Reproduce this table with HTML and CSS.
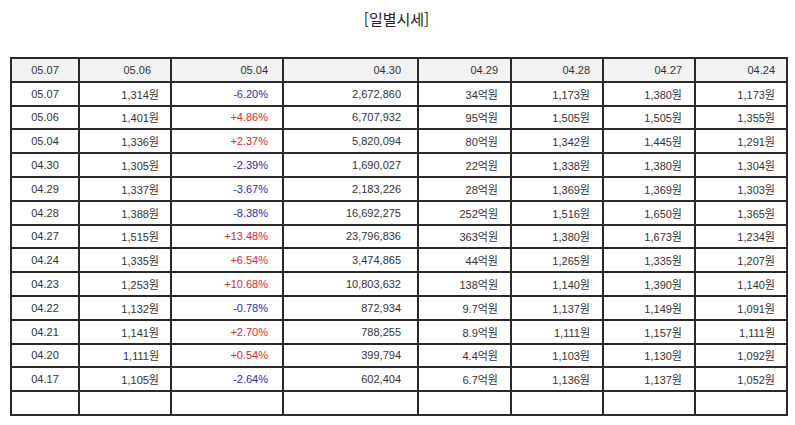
FILE: index.html
```html
<!DOCTYPE html>
<html lang="ko">
<head>
<meta charset="utf-8">
<title>일별시세</title>
<link rel="stylesheet" href="styles.css">
</head>
<body>
<div class="title">[일별시세]</div>
<table class="grid">
<colgroup>
<col class="c1"><col class="c2"><col class="c3"><col class="c4"><col class="c5"><col class="c6"><col class="c7"><col class="c8">
</colgroup>
<thead>
<tr><th class="date">05.07</th><th class="h2">05.06</th><th class="pct">05.04</th><th class="vol">04.30</th><th>04.29</th><th>04.28</th><th>04.27</th><th class="last">04.24</th></tr>
</thead>
<tbody>
<tr><td class="date">05.07</td><td>1,314원</td><td class="pct down">-6.20%</td><td class="vol">2,672,860</td><td>34억원</td><td>1,173원</td><td>1,380원</td><td class="last">1,173원</td></tr>
<tr><td class="date">05.06</td><td>1,401원</td><td class="pct up">+4.86%</td><td class="vol">6,707,932</td><td>95억원</td><td>1,505원</td><td>1,505원</td><td class="last">1,355원</td></tr>
<tr><td class="date">05.04</td><td>1,336원</td><td class="pct up">+2.37%</td><td class="vol">5,820,094</td><td>80억원</td><td>1,342원</td><td>1,445원</td><td class="last">1,291원</td></tr>
<tr><td class="date">04.30</td><td>1,305원</td><td class="pct down">-2.39%</td><td class="vol">1,690,027</td><td>22억원</td><td>1,338원</td><td>1,380원</td><td class="last">1,304원</td></tr>
<tr><td class="date">04.29</td><td>1,337원</td><td class="pct down">-3.67%</td><td class="vol">2,183,226</td><td>28억원</td><td>1,369원</td><td>1,369원</td><td class="last">1,303원</td></tr>
<tr><td class="date">04.28</td><td>1,388원</td><td class="pct down">-8.38%</td><td class="vol">16,692,275</td><td>252억원</td><td>1,516원</td><td>1,650원</td><td class="last">1,365원</td></tr>
<tr><td class="date">04.27</td><td>1,515원</td><td class="pct up">+13.48%</td><td class="vol">23,796,836</td><td>363억원</td><td>1,380원</td><td>1,673원</td><td class="last">1,234원</td></tr>
<tr><td class="date">04.24</td><td>1,335원</td><td class="pct up">+6.54%</td><td class="vol">3,474,865</td><td>44억원</td><td>1,265원</td><td>1,335원</td><td class="last">1,207원</td></tr>
<tr><td class="date">04.23</td><td>1,253원</td><td class="pct up">+10.68%</td><td class="vol">10,803,632</td><td>138억원</td><td>1,140원</td><td>1,390원</td><td class="last">1,140원</td></tr>
<tr><td class="date">04.22</td><td>1,132원</td><td class="pct down">-0.78%</td><td class="vol">872,934</td><td>9.7억원</td><td>1,137원</td><td>1,149원</td><td class="last">1,091원</td></tr>
<tr><td class="date">04.21</td><td>1,141원</td><td class="pct up">+2.70%</td><td class="vol">788,255</td><td>8.9억원</td><td>1,111원</td><td>1,157원</td><td class="last">1,111원</td></tr>
<tr><td class="date">04.20</td><td>1,111원</td><td class="pct up">+0.54%</td><td class="vol">399,794</td><td>4.4억원</td><td>1,103원</td><td>1,130원</td><td class="last">1,092원</td></tr>
<tr><td class="date">04.17</td><td>1,105원</td><td class="pct down">-2.64%</td><td class="vol">602,404</td><td>6.7억원</td><td>1,136원</td><td>1,137원</td><td class="last">1,052원</td></tr>
<tr class="empty"><td class="date"></td><td></td><td class="pct"></td><td class="vol"></td><td></td><td></td><td></td><td class="last"></td></tr>
</tbody>
</table>
</body>
</html>
```
FILE: styles.css
```css
html, body {
  margin: 0;
  padding: 0;
  background: #ffffff;
}

body {
  font-family: "Liberation Sans", "Noto Sans CJK KR", sans-serif;
  color: #333333;
}

.title {
  font-family: "Noto Sans CJK KR", "Noto Sans", sans-serif;
  font-size: 15px;
  line-height: 24px;
  color: #222222;
  text-align: center;
  padding-top: 7px;
  height: 50px;
  box-sizing: border-box;
  margin-left: -2px;
}

.grid {
  border-collapse: collapse;
  table-layout: fixed;
  width: 776px;
  margin-left: 10px;
  margin-top: 7px;
  font-size: 11px;
}

.c1 { width: 68px; }
.c2 { width: 92px; }
.c3 { width: 112px; }
.c4 { width: 135px; }
.c5 { width: 93px; }
.c6 { width: 92px; }
.c7 { width: 92px; }
.c8 { width: 92px; }

.grid tr {
  height: 23.8px;
}

.grid th,
.grid td {
  border: 2px solid #2a2a2a;
  padding: 0 12px 0 0;
  text-align: right;
  font-weight: normal;
  white-space: nowrap;
  vertical-align: middle;
}

.grid th {
  background: #f2f2f2;
}

.grid .date {
  text-align: center;
  padding: 0;
}

.grid th.h2 {
  padding-right: 19px;
}

.grid td:nth-child(2) {
  padding-right: 11px;
}

.grid .pct {
  padding-right: 14px;
}

.grid .vol {
  padding-right: 16px;
}

.grid .last {
  padding-right: 11px;
}

.up {
  color: #e0262e;
}

.down {
  color: #2b2bc4;
}
```
